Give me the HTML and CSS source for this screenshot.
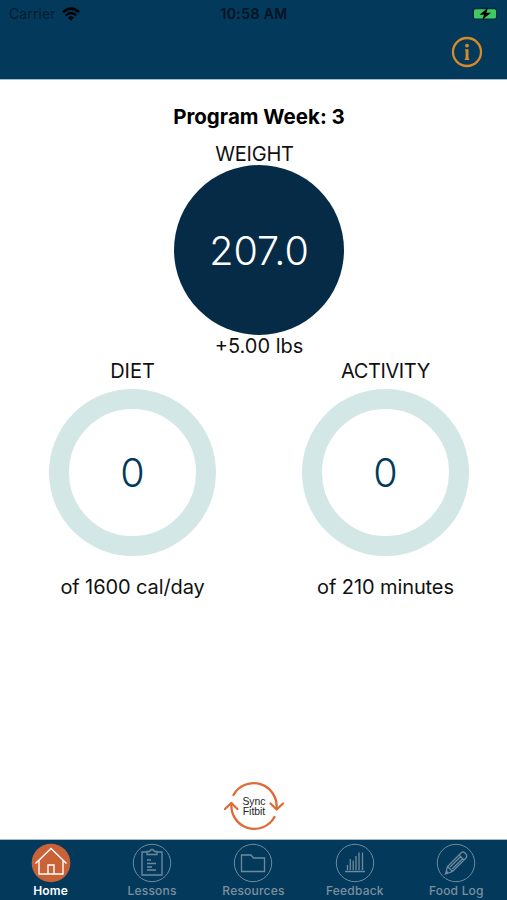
FILE: index.html
```html
<!DOCTYPE html>
<html lang="en">

<head>
    <meta charset="UTF-8">
    <meta name="viewport" content="width=device-width, initial-scale=1.0">
    <title>Home</title>
    <link rel="stylesheet" href="styles.css">
</head>

<body>
    <header class="header">
        <div class="status-bar">
            <div class="carrier">
                <span class="carrier-name">Carrier</span>
                <svg width="18" height="14" viewBox="0 0 18 14">
                    <path d="M1 5.2Q9 -2 17 5.2" fill="none" stroke="#000" stroke-width="2.6" />
                    <path d="M3.8 8.3Q9 3.7 14.2 8.3" fill="none" stroke="#000" stroke-width="2.4" />
                    <path d="M6 10.7Q9 8 12 10.7L9 13.8Z" />
                </svg>
            </div>
            <span class="time">10:58 AM</span>
            <svg class="battery" width="28" height="14" viewBox="0 0 28 14">
                <rect x="1" y="0.5" width="25" height="12.5" rx="3.5" fill="#032b46" />
                <rect x="3" y="2.2" width="22" height="9.2" rx="1.5" fill="#3fca62" />
                <path d="M17 0.8L8.5 7.8H13L11.3 12.8L20 5.8H15.3Z" fill="#000" />
            </svg>
        </div>
        <div class="nav-bar">
            <svg width="32" height="32" viewBox="0 0 32 32">
                <circle cx="16" cy="16" r="14" fill="none" stroke="#d98a26" stroke-width="2.3" />
                <circle cx="16" cy="9.6" r="1.9" fill="#d98a26" />
                <path d="M14 13.2H17.5V22.6H18.2V24H13.8V22.6H14.6V14.6H14Z" fill="#d98a26" />
            </svg>
        </div>
    </header>

    <main class="content">
        <h1 class="title">Program Week: 3</h1>
        <section class="weight">
            <div class="label weight-label">WEIGHT</div>
            <div class="weight-circle"><span class="weight-value">207.0</span></div>
            <div class="label weight-change">+5.00 lbs</div>
        </section>
        <div class="goals">
            <section class="goal">
                <div class="label">DIET</div>
                <div class="ring">0</div>
                <div class="label goal-target">of 1600 cal/day</div>
            </section>
            <section class="goal">
                <div class="label activity-label">ACTIVITY</div>
                <div class="ring">0</div>
                <div class="label goal-target">of 210 minutes</div>
            </section>
        </div>
        <div class="sync">
            <svg width="64" height="52" viewBox="0 0 64 52">
                <g fill="none" stroke="#df6a36" stroke-width="2.3" stroke-linecap="round" stroke-linejoin="round">
                    <path d="M11.5 15A23 23 0 0 1 54.5 28.5" />
                    <path d="M48.5 23.5L54.7 29.5L61 23.5" />
                    <path d="M52.5 37A23 23 0 0 1 9.5 23.5" />
                    <path d="M3 29L9.3 23L15.5 29" />
                </g>
                <text class="sync-text" x="32" y="24.5">Sync</text>
                <text class="sync-text" x="32" y="35">Fitbit</text>
            </svg>
        </div>
    </main>

    <nav class="tab-bar">
        <a class="tab active">
            <svg class="tab-icon" viewBox="0 0 40 40">
                <circle cx="20" cy="20" r="19.3" fill="#ca6237" />
                <path d="M4.5 20.5L20 5.5L35.5 20.5M8 17.5V31H32V17.5M17 31V22H23V31" />
            </svg>
            <span>Home</span>
        </a>
        <a class="tab">
            <svg class="tab-icon" viewBox="0 0 40 40">
                <circle cx="20" cy="20" r="18.7" />
                <path d="M15 9H10V32H30V9H25" />
                <path d="M15 11.5V8.5H17.5Q20 4.5 22.5 8.5H25V11.5ZM15 17H19M15 20.5H24M15 24H20M15 27H24" />
            </svg>
            <span>Lessons</span>
        </a>
        <a class="tab">
            <svg class="tab-icon" viewBox="0 0 40 40">
                <circle cx="20" cy="20" r="18.7" />
                <path d="M8.5 28.5V12H18L20.5 15H31.5V28.5Z" />
            </svg>
            <span>Resources</span>
        </a>
        <a class="tab">
            <svg class="tab-icon" viewBox="0 0 40 40">
                <circle cx="20" cy="20" r="18.7" />
                <path d="M10 28.5H30M12.5 27V22M15.3 27V16M18.2 27V17.5M21 27V13M24 27V9.5M27.5 27V9.5" />
            </svg>
            <span>Feedback</span>
        </a>
        <a class="tab">
            <svg class="tab-icon" viewBox="0 0 40 40">
                <circle cx="20" cy="20" r="18.7" />
                <path d="M9.5 31L11.5 23.5L24.5 10.5Q27 7.5 29.5 10.5Q32 13 29.5 15.5L16.5 28.5ZM11.5 23.5L16.5 28.5M23 12L28 17M14 24L24.5 13.8M16.2 26L26.5 15.7M9.5 31L12 28.5" />
            </svg>
            <span>Food Log</span>
        </a>
    </nav>
</body>

</html>
```
FILE: styles.css
```css
body, html {
    margin: 0;
    padding: 0;
    height: 100%;
    font-family: Inter, "Liberation Sans", sans-serif;
    background-color: #fff;
    color: #111;
}

body {
    display: flex;
    flex-direction: column;
    overflow: hidden;
}

.header {
    height: 80px;
    flex: none;
    background: #033a5c;
    border-bottom: 1px solid #a3bccb;
    box-sizing: border-box;
}

.status-bar {
    display: grid;
    grid-template-columns: 1fr auto 1fr;
    align-items: center;
    height: 27px;
    padding: 0 8px 0 9px;
    color: #000;
}

.carrier {
    display: flex;
    align-items: center;
    gap: 6px;
}

.carrier-name {
    font-size: 14px;
    letter-spacing: 0.1px;
    color: #021a2b;
}

.time {
    font-size: 14px;
    font-weight: 600;
    letter-spacing: 0.4px;
    color: #021320;
}

.battery {
    justify-self: end;
}

.nav-bar {
    display: flex;
    justify-content: flex-end;
    padding: 9px 24px 0 0;
}

.content {
    flex: 1;
    display: flex;
    flex-direction: column;
}

.title {
    margin: 24px 0 0;
    padding-left: 11px;
    font-size: 20.5px;
    line-height: 26px;
    font-weight: 700;
    text-align: center;
    color: #000;
}

.label {
    font-size: 20px;
    line-height: 24px;
    white-space: nowrap;
}

.weight {
    display: flex;
    flex-direction: column;
    align-items: center;
    padding: 12px 0 0 11px;
}

.weight-label {
    padding-right: 9px;
    margin-bottom: -1px;
    letter-spacing: -0.2px;
}

.weight-change {
    margin-top: -1px;
}

.weight-circle {
    display: flex;
    align-items: center;
    justify-content: center;
    width: 170px;
    height: 170px;
    border-radius: 50%;
    background: #052b47;
    color: #fff;
}

.weight-value {
    padding-top: 2px;
    font-size: 39.5px;
    font-weight: 350;
}

.goals {
    display: grid;
    grid-template-columns: 253px 253px;
    padding: 1px 0 0 6px;
    margin-right: -5px;
}

.goal {
    display: flex;
    flex-direction: column;
    align-items: center;
}

.activity-label {
    letter-spacing: -0.4px;
}

.goal-target {
    letter-spacing: -0.1px;
}

.ring {
    display: flex;
    align-items: center;
    justify-content: center;
    width: 167px;
    height: 167px;
    margin: 6px 0 19px;
    border: 20px solid #d3e7e6;
    border-radius: 50%;
    box-sizing: border-box;
    font-size: 39.5px;
    font-weight: 350;
    color: #033a5c;
}

.sync {
    display: flex;
    justify-content: center;
    margin-top: auto;
    padding-bottom: 7px;
}

.sync-text {
    font-family: "Liberation Sans", sans-serif;
    font-size: 10.4px;
    text-anchor: middle;
    fill: #222;
}

.tab-bar {
    display: grid;
    grid-template-columns: repeat(5, 1fr);
    flex: none;
    height: 61px;
    box-sizing: border-box;
    border-top: 1px solid #a3bccb;
    background: #033a5c;
}

.tab {
    display: flex;
    flex-direction: column;
    align-items: center;
    padding-top: 3px;
    font-size: 12px;
    line-height: 16px;
    font-weight: 500;
    letter-spacing: 0.2px;
    color: #7c8f9f;
}

.tab-icon {
    width: 40px;
    height: 40px;
    fill: none;
    stroke: #6f8a9d;
    stroke-width: 1.3;
}

.tab-icon circle {
    stroke-width: 1;
}

.tab.active {
    font-weight: 600;
    color: #fff;
}

.tab.active circle {
    stroke: none;
}

.tab.active .tab-icon {
    stroke: #fff;
    stroke-width: 1.4;
}
```
